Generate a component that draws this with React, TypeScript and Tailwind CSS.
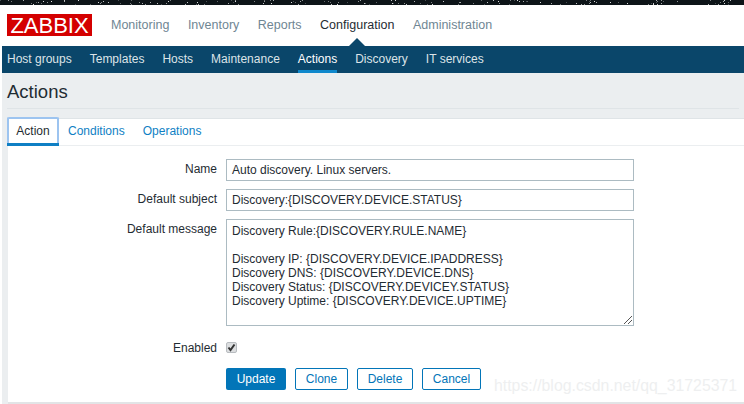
const sub = ["Host groups","Templates","Hosts","Maintenance","Actions","Discovery","IT services"];
const top = ["Monitoring","Inventory","Reports","Configuration","Administration"];
const msg = `Discovery Rule:{DISCOVERY.RULE.NAME}

Discovery IP: {DISCOVERY.DEVICE.IPADDRESS}
Discovery DNS: {DISCOVERY.DEVICE.DNS}
Discovery Status: {DISCOVERY.DEVICEY.STATUS}
Discovery Uptime: {DISCOVERY.DEVICE.UPTIME}`;

function Stars() {
  const dots = Array.from({ length: 150 }, (_, i) => ({
    x: (i * 97 + (i * i) % 53) % 744,
    y: (i * 7) % 5,
    o: 0.25 + ((i * 13) % 7) / 10,
  }));
  return (
    <svg width="744" height="5" className="block bg-[#0d1418]">
      {dots.map((d, i) => <rect key={i} x={d.x} y={d.y} width="1" height="1" fill="#fff" opacity={d.o} />)}
    </svg>
  );
}

function Row({ label, children, cls }: { label: string; children: React.ReactNode; cls?: string }) {
  return (
    <div className={"flex " + (cls ?? "")}>
      <div className="w-[209px] pr-[9px] text-right text-[12px] leading-[14px] pt-[3px] text-[#1f2c33]">{label}</div>
      {children}
    </div>
  );
}

function Btn({ children, w }: { children: React.ReactNode; w: string }) {
  return <div className={"h-[22px] border border-[#0275b8] rounded-[2px] text-[#0275b8] text-[12px] leading-[20px] text-center bg-white " + w}>{children}</div>;
}

export default function App() {
  return (
    <div className="w-[744px] h-[404px] overflow-hidden bg-white relative font-['Liberation_Sans',Arial,sans-serif]">
      <Stars />
      <div className="h-[41px] flex items-start pl-[7px] pt-[9px]">
        <div className="w-[85px] h-[22px] bg-[#d40000] text-white text-[22px] leading-[23px] text-center mr-[19px]">ZABBIX</div>
        <div className="flex gap-[18.5px] mt-[3px] text-[12.5px] leading-[16px] text-[#6f8693]">
          {top.map(t => <span key={t} className={t === "Configuration" ? "text-[#1f2c33]" : ""}>{t}</span>)}
        </div>
      </div>
      <div className="ml-[2px] h-[27px] bg-[#0a466a] flex pl-[5px] gap-[18px] text-[12px] relative">
        <div className="absolute left-[347px] top-[-8px] w-0 h-0 border-l-[8px] border-r-[8px] border-b-[8px] border-l-transparent border-r-transparent border-b-[#0a466a]" />
        {sub.map(s => (
          <div key={s} className={"h-[27px] pt-[6px] leading-[14px] " + (s === "Actions" ? "text-white border-b-[3px] border-[#0f88cc]" : "text-[#dde4e8]")}>{s}</div>
        ))}
      </div>
      <div className="ml-[2px] h-[331px] bg-[#ebeef0] px-[5px] flex flex-col">
        <div className="h-[36px] border-b border-[#dfe4e7] flex items-center pt-[2px]">
          <h1 className="text-[18.5px] leading-[20px] text-[#1f2c33]">Actions</h1>
        </div>
        <div className="mt-[9px] ml-[1px] -mr-[7px] flex-1 bg-white border-t border-[#dfe4e7] border-b-2 border-b-[#e2e4e6]">
          <div className="h-[27px] border-b border-[#ebeef0] flex text-[12px] leading-[14px] text-[#0f7fc4]">
            <div className="w-[52px] h-[29px] -mt-[2px] -ml-[1px] border-2 border-[#9dc4f0] border-b-0 rounded-[2px] bg-white text-center pt-[5px] text-[#1f2c33] relative z-10">
              Action
              <div className="absolute left-[-2px] right-[-2px] bottom-0 h-[3px] bg-[#0f7fc4]" />
            </div>
            <span className="ml-[9px] pt-[5px]">Conditions</span>
            <span className="ml-[18px] pt-[5px]">Operations</span>
          </div>
          <div className="pt-[13px] pl-[9px]">
            <Row label="Name">
              <div className="w-[408px] h-[22px] border border-[#acbbc2] text-[12px] leading-[20px] px-[5px] text-[#1f2c33]">Auto discovery. Linux servers.</div>
            </Row>
            <Row label="Default subject" cls="mt-[8px]">
              <div className="w-[408px] h-[22px] border border-[#acbbc2] text-[12px] leading-[20px] px-[5px] text-[#1f2c33]">Discovery:{"{DISCOVERY.DEVICE.STATUS}"}</div>
            </Row>
            <Row label="Default message" cls="mt-[8px]">
              <div className="relative w-[408px] h-[107px] border border-[#acbbc2] text-[12px] leading-[14px] px-[5px] pt-[4px] whitespace-pre text-[#1f2c33]">
                {msg}
                <svg className="absolute right-0 bottom-0" width="10" height="10" viewBox="0 0 10 10">
                  <path d="M1 9 9 1M5 9 9 5" stroke="#555" strokeWidth="1" fill="none" />
                </svg>
              </div>
            </Row>
            <Row label="Enabled" cls="mt-[12px] h-[16px]">
              <div className="w-[11px] h-[11px] mt-[4px] bg-[#dcdee0] border border-[#b8bcc0] rounded-[2px] flex items-center justify-center">
                <svg width="9" height="9" viewBox="0 0 9 9"><path d="M1.5 4.5 3.5 7 7.5 1.5" stroke="#333" strokeWidth="2" fill="none" /></svg>
              </div>
            </Row>
            <div className="ml-[209px] mt-[14px] flex gap-[9px]">
              <div className="w-[60px] h-[22px] bg-[#0275b8] rounded-[2px] text-white text-[12px] leading-[22px] text-center">Update</div>
              <Btn w="w-[53px]">Clone</Btn>
              <Btn w="w-[56px]">Delete</Btn>
              <Btn w="w-[59px]">Cancel</Btn>
            </div>
          </div>
        </div>
      </div>
      <div className="absolute left-[494px] top-[377px] text-[15.85px] leading-[18px] text-[#eeeff0]">https://blog.csdn.net/qq_31725371</div>
    </div>
  );
}
